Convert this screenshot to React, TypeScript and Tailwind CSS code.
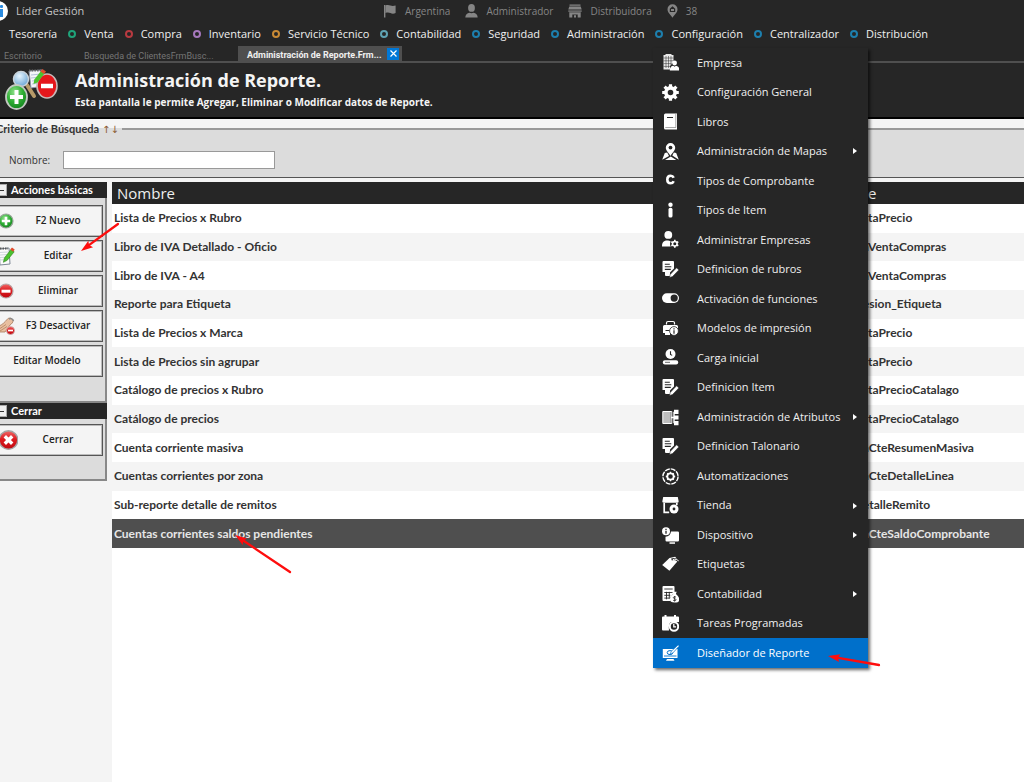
import type { ReactNode } from "react";

const DARK = "#262626";

/* ---------- status bar icons ---------- */

function InfoBadge() {
  return (
    <svg width="8" height="20" viewBox="0 0 8 20" aria-hidden="true">
      <circle cx="-2" cy="10" r="10" fill="#fff" />
      <rect x="0" y="4" width="3" height="3" rx="1" fill="#2a8be0" />
      <rect x="0" y="8" width="3" height="8" fill="#2a8be0" />
    </svg>
  );
}

const statusIcons: Record<string, ReactNode> = {
  flag: (
    <svg width="13" height="14" viewBox="0 0 13 14" fill="currentColor" aria-hidden="true">
      <path d="M0 1h1.400v12.500H0z" />
      <path d="M1.400 1.500c2-.8 3.500-.5 5 .1s3 .7 5.200 0v7.500c-2 .8-3.700.6-5.200 0s-3-.8-5 0z" />
    </svg>
  ),
  user: (
    <svg width="13" height="14" viewBox="0 0 13 14" fill="currentColor" aria-hidden="true">
      <ellipse cx="6.500" cy="3.900" rx="3.400" ry="3.900" />
      <path d="M.3 13.600c0-3 1.800-4.600 4.200-4.900l2 .5 2-.5c2.400.3 4.200 1.900 4.200 4.900z" />
    </svg>
  ),
  store: (
    <svg width="14" height="14" viewBox="0 0 14 14" fill="currentColor" aria-hidden="true">
      <path d="M1.500.5h11v1.300h-11zM1.300 2.600h11.400l1 3H.3z" />
      <path d="M.3 6.200h13.400v1L12.700 8.500H1.300L.3 7.200z" opacity=".7" />
      <path d="M1.300 8.500h11.400v5h-3v-3H4.300v3h-3z" />
      <path d="M6 11.300h2v2.200H6z" />
    </svg>
  ),
  pin: (
    <svg width="11" height="14" viewBox="0 0 11 14" fill="currentColor" aria-hidden="true">
      <path d="M5.500.3a5 5 0 0 1 5 5c0 3.500-3.400 5.600-5 8.400C3.900 10.900.5 8.800.5 5.300a5 5 0 0 1 5-5z" />
      <path d="M5.500 2.300L8.200 4.700v3.300H2.800V4.700z" fill={DARK} />
      <path d="M4 5h3v2H4z" />
    </svg>
  ),
};

const status = [
  { icon: "flag", label: "Argentina" },
  { icon: "user", label: "Administrador" },
  { icon: "store", label: "Distribuidora" },
  { icon: "pin", label: "38" },
];

/* ---------- configuration menu icons (17 x 17 grid) ---------- */

const docPencil = (
  <>
    <path d="M1.500 0h9.500a1 1 0 0 1 1 1v6.500L8 11.500V15H4a1 1 0 0 1-1-1V11H.5V1a1 1 0 0 1 1-1z" />
    <path d="M2.800 3.200h5M2.800 5.800h6.500M2.800 8.400h6" stroke={DARK} strokeWidth="1.100" />
    <path d="M14.600 6.800l2.200 2.200-6.300 6.600-2.900.9.600-3z" stroke={DARK} strokeWidth=".5" />
  </>
);

const menuIcons: Record<string, ReactNode> = {
  building: (
    <>
      <path d="M1.500 1h2V0h6v1h2v7L8 12v3.500H1.500z" opacity=".9" />
      <path d="M1.500 4h10M1.500 6.800h10M1.500 9.600h8M1.500 12.400h7M4 2v12M6.500 2v12M9 2v9" stroke={DARK} strokeWidth=".5" />
      <circle cx="12.600" cy="9" r="2.400" />
      <path d="M7.800 16.500c0-3.200 1.600-4.500 3.500-4.700l1.300 1 1.300-1c1.900.2 3.500 1.500 3.500 4.700z" />
    </>
  ),
  gear: (
    <>
      <circle cx="8.500" cy="8.500" r="4.600" fill="none" stroke="currentColor" strokeWidth="3.600" />
      <path
        d="M8.500.2v3M8.500 13.800v3M.2 8.500h3M13.800 8.500h3M2.600 2.600l2.200 2.200M12.200 12.200l2.200 2.200M14.400 2.600l-2.200 2.200M4.800 12.200l-2.200 2.200"
        stroke="currentColor"
        strokeWidth="3.200"
      />
    </>
  ),
  book: (
    <>
      <path d="M3.500.5H15v16H3.500a1.600 1.600 0 0 1-1.500-1.600V2A1.500 1.500 0 0 1 3.500.5z" />
      <path d="M5 4.500h6" stroke={DARK} strokeWidth="1" />
      <path d="M13.800 1v13.500H3.300" stroke={DARK} strokeWidth=".4" fill="none" />
    </>
  ),
  map: (
    <>
      <path d="M8.500 0a4.700 4.700 0 0 1 4.700 4.700c0 3-3 5-4.700 8.300C6.800 9.700 3.800 7.700 3.800 4.700A4.700 4.700 0 0 1 8.500 0z" />
      <circle cx="8.500" cy="4.600" r="1.900" fill={DARK} />
      <path d="M2.800 10l2.400-.5 1.800 3.500-6.800 3.800zM14.200 10l-2.400-.5-1.500 3 6.500 4.200zM8.800 13.500l5.500 3.400H3z" />
    </>
  ),
  letterC: (
    <path
      d="M11.700 6.200C11 4.600 9.800 4.200 8.700 4.200 6.600 4.200 5.300 5.900 5.300 8s1.300 3.800 3.400 3.800c1.100 0 2.300-.4 3-2"
      transform="translate(0 -.5)"
      fill="none"
      stroke="currentColor"
      strokeWidth="2.600"
    />
  ),
  info: (
    <>
      <circle cx="8.500" cy="2.800" r="2.200" />
      <rect x="6.500" y="5.800" width="4" height="9.800" rx="1.700" />
    </>
  ),
  userGear: (
    <>
      <circle cx="6.300" cy="3.900" r="3.900" />
      <path d="M0 15.500c0-4.500 2.300-5.900 5-5.900 1.500 0 2.800.2 3.700.9-1 1.600-.9 3.400 0 5z" />
      <circle cx="12.800" cy="12.800" r="2.300" fill="none" stroke="currentColor" strokeWidth="1.500" />
      <path
        d="M12.800 8.800v2M12.800 14.800v2M9.300 10.800l1.800 1M14.500 13.800l1.800 1M16.300 10.800l-1.800 1M11.100 13.800l-1.800 1"
        stroke="currentColor"
        strokeWidth="1.600"
      />
    </>
  ),
  docPencil,
  toggle: (
    <>
      <rect x="0" y="3.300" width="17" height="9.600" rx="4.800" />
      <circle cx="12.200" cy="8.100" r="3.600" fill={DARK} />
    </>
  ),
  printer: (
    <>
      <path d="M4.500 4.500V3a1.500 1.500 0 0 1 1.500-1.500h5A1.500 1.500 0 0 1 12.500 3v1.500" fill="none" stroke="currentColor" strokeWidth="1.200" />
      <path d="M2.500 5h12a1.500 1.500 0 0 1 1.500 1.500V12H8v3H3v-2H1V6.500A1.500 1.500 0 0 1 2.500 5z" />
      <path d="M3.500 10.500h4" stroke={DARK} strokeWidth="1" />
      <circle cx="12" cy="11" r="4.400" stroke={DARK} strokeWidth=".8" />
      <path d="M12 8.300v1.200M12 10.300v3.500" stroke={DARK} strokeWidth="1.200" />
    </>
  ),
  clockBase: (
    <>
      <circle cx="8.500" cy="5" r="5" />
      <path d="M8.500 2.200v3.200l1.700 1" stroke={DARK} strokeWidth="1.100" fill="none" />
      <rect x=".8" y="11.200" width="15.400" height="4.200" rx="2" />
      <path d="M3 13.300h5" stroke={DARK} strokeWidth=".7" />
    </>
  ),
  tree: (
    <>
      <path d="M.8 2.500h8v12h-8z" opacity=".7" />
      <path d="M.8 2.500h9v12h-9z" fill="none" stroke="currentColor" strokeWidth="1" />
      <path d="M9 8.500h4M12 2.800v11.500M12 2.800h2M12 14.200h2" stroke="currentColor" strokeWidth="1.400" fill="none" />
      <path d="M12 .8h4.500V5H12zM12 6.400h4.500v4.200H12zM12 12h4.500v4.200H12z" />
    </>
  ),
  automation: (
    <>
      <circle cx="8.500" cy="8.500" r="7.600" fill="none" stroke="currentColor" strokeWidth="1.400" strokeDasharray="5 .97" />
      <circle cx="8.500" cy="8.500" r="3.200" fill="none" stroke="currentColor" strokeWidth="1.800" />
      <path
        d="M8.500 3.800v1.500M8.500 11.700v1.500M3.800 8.500h1.500M11.700 8.500h1.500M5.200 5.200l1 1M10.800 10.800l1 1M11.800 5.200l-1 1M6.200 10.800l-1 1"
        stroke="currentColor"
        strokeWidth="1.300"
      />
    </>
  ),
  shop: (
    <>
      <path d="M1.200 0h14.600l.9 4.500a1.500 1.500 0 0 1-1.500 1.300H1.800A1.500 1.500 0 0 1 .3 4.500z" />
      <path d="M2.200 6v9.300h5M14.800 6v2" stroke="currentColor" strokeWidth="1.700" fill="none" />
      <circle cx="12" cy="12" r="4.500" />
      <circle cx="12" cy="12" r="1.400" fill={DARK} />
    </>
  ),
  device: (
    <>
      <path d="M9 4.500h6.800A1.200 1.200 0 0 1 17 5.700v7.500a1.200 1.200 0 0 1-1.200 1.200H4.700A1.200 1.200 0 0 1 3.500 13.200V9.800C6.500 9.500 8.800 7.500 9 4.500z" />
      <path d="M7.500 15.300h5.500v1.500H7.500z" />
      <circle cx="4" cy="4.200" r="4" />
      <path d="M4 1.700v1.300M4 3.800v3" stroke={DARK} strokeWidth="1.300" />
    </>
  ),
  tag: (
    <>
      <path d="M.2 9L7.500 2 13.200.8l3 3.600-8.800 10.300z" />
      <path d="M9.500 3.500c2-.8 5-.5 7 1.800" fill="none" stroke={DARK} strokeWidth="2" />
      <path d="M10.800 3.600c2-.9 5-.2 6 1.700" fill="none" stroke="currentColor" strokeWidth="1" />
    </>
  ),
  calculator: (
    <>
      <path d="M1.500 0h10a1 1 0 0 1 1 1V6.500L8.500 11v4h-7a1 1 0 0 1-1-1V1a1 1 0 0 1 1-1z" />
      <path d="M2.300 3h8.400M2.300 6.500h8.400M2.300 9.300h6M2.300 12.100h5M4.500 5.800v7.500M7.300 5.800v7" stroke={DARK} strokeWidth=".9" />
      <path d="M10.500 5.800h4.200l-.8 2.200c2 1.500 3.300 3.600 3.300 5.300 0 2.400-1.300 3.300-4.600 3.300S8 15.700 8 13.300c0-1.700 1.300-3.800 3.300-5.300z" />
      <path d="M14 11.200c-.8-.7-2.700-.6-2.700.5s2.700.8 2.700 2-1.900 1.300-2.900.5M12.600 10v5.500" stroke={DARK} strokeWidth=".8" fill="none" />
    </>
  ),
  calendarClock: (
    <>
      <path d="M2.500 0h2v1.500h7.500V0h2v1.500H16a1 1 0 0 1 1 1V7H9c-2 1.500-2.500 4-2 8.500H1a1 1 0 0 1-1-1v-12a1 1 0 0 1 1-1h1.500z" />
      <circle cx="12" cy="11.500" r="4.200" fill={DARK} stroke="currentColor" strokeWidth="2" />
      <path d="M11.800 9v2.800h2.300" stroke="currentColor" strokeWidth="1.300" fill="none" />
    </>
  ),
  designer: (
    <>
      <path d="M.8 4h14.700v9H.8zM5 14h6.500l1 1.800H4z" />
      <path d="M2 11h12.500" stroke="#0070cb" strokeWidth=".9" />
      <ellipse cx="8" cy="7.600" rx="2.800" ry="2" stroke="#0070cb" strokeWidth="1" fill="none" />
      <path d="M16.200-.2l1 1.200-6.200 6.800-3 1.700 1.300-3.200z" stroke="#0070cb" strokeWidth=".7" />
    </>
  ),
};

const menuItems = [
  { icon: "building", label: "Empresa" },
  { icon: "gear", label: "Configuración General" },
  { icon: "book", label: "Libros" },
  { icon: "map", label: "Administración de Mapas", sub: true },
  { icon: "letterC", label: "Tipos de Comprobante" },
  { icon: "info", label: "Tipos de Item" },
  { icon: "userGear", label: "Administrar Empresas" },
  { icon: "docPencil", label: "Definicion de rubros" },
  { icon: "toggle", label: "Activación de funciones" },
  { icon: "printer", label: "Modelos de impresión" },
  { icon: "clockBase", label: "Carga inicial" },
  { icon: "docPencil", label: "Definicion Item" },
  { icon: "tree", label: "Administración de Atributos", sub: true },
  { icon: "docPencil", label: "Definicion Talonario" },
  { icon: "automation", label: "Automatizaciones" },
  { icon: "shop", label: "Tienda", sub: true },
  { icon: "device", label: "Dispositivo", sub: true },
  { icon: "tag", label: "Etiquetas" },
  { icon: "calculator", label: "Contabilidad", sub: true },
  { icon: "calendarClock", label: "Tareas Programadas" },
  { icon: "designer", label: "Diseñador de Reporte", active: true },
];

/* ---------- main navigation ---------- */

const nav = [
  { label: "Tesorería", ring: "" },
  { label: "Venta", ring: "border-[#1fa37a]" },
  { label: "Compra", ring: "border-[#b83a40]" },
  { label: "Inventario", ring: "border-[#a678bd]" },
  { label: "Servicio Técnico", ring: "border-[#c98a35]" },
  { label: "Contabilidad", ring: "border-[#5fa3b3]" },
  { label: "Seguridad", ring: "border-[#1d7fae]" },
  { label: "Administración", ring: "border-[#1d7fae]" },
  { label: "Configuración", ring: "border-[#1d7fae]" },
  { label: "Centralizador", ring: "border-[#1d7fae]" },
  { label: "Distribución", ring: "border-[#1d7fae]" },
];

/* ---------- sidebar icons ---------- */

function Gradients() {
  return (
    <svg width="0" height="0" className="absolute" aria-hidden="true">
      <defs>
        <radialGradient id="green" cx=".4" cy=".3" r=".8">
          <stop offset="0" stopColor="#8fe08a" />
          <stop offset=".5" stopColor="#2fae35" />
          <stop offset="1" stopColor="#0c7a18" />
        </radialGradient>
        <linearGradient id="red" x1="0" y1="0" x2="0" y2="1">
          <stop offset="0" stopColor="#f06a6a" />
          <stop offset=".45" stopColor="#dd1c20" />
          <stop offset="1" stopColor="#c00810" />
        </linearGradient>
        <radialGradient id="lens" cx=".4" cy=".3" r=".8">
          <stop offset="0" stopColor="#e8f6ff" />
          <stop offset="1" stopColor="#5b9cd0" />
        </radialGradient>
      </defs>
    </svg>
  );
}

const actionIcons: Record<string, ReactNode> = {
  add: (
    <>
      <circle cx="6" cy="10" r="7" fill="url(#green)" stroke="#9aa59a" strokeWidth="1.200" />
      <path d="M6 5.800v8.400M1.800 10h8.400" stroke="#fff" strokeWidth="2.600" />
    </>
  ),
  edit: (
    <>
      <path d="M-1 3l10-1 1 16-10 1z" fill="#fbfbfb" stroke="#7c8794" />
      <path d="M0 6.500l8-.5M0 9l8-.5M0 11.500l8-.5M0 14l8-.5" stroke="#c3ccd6" strokeWidth=".8" />
      <path d="M0 2.500h8" stroke="#555" strokeWidth="2" strokeDasharray="1.500 1" />
      <path d="M11 3.500l3.200 2.300-7 8.500-3.800 2 1-4.300z" fill="#4bc22f" stroke="#2a7d1a" strokeWidth=".6" />
      <path d="M12 1.500l2.700 2-1.500 2.300-3-2.300z" fill="#e04a2b" />
    </>
  ),
  remove: (
    <>
      <circle cx="6" cy="10" r="7" fill="url(#red)" stroke="#b8a6a6" strokeWidth="1.200" />
      <path d="M1.500 10.200h9" stroke="#fff" strokeWidth="3" />
    </>
  ),
  disable: (
    <>
      <path d="M-1 10c3-1 6-4 8-6.500s5-1.500 6 1c.5 1.500-1.500 3.500-3 4.500L5 16H-1z" fill="#e8bfa0" stroke="#a77a5c" strokeWidth=".8" />
      <path d="M0 12.500l6-4M0 15l7-4.500" stroke="#b5835f" strokeWidth=".8" />
      <path d="M9 3c2-1 4 0 4.500 2" stroke="#8b8b8b" strokeWidth="1.500" fill="none" />
      <circle cx="10.500" cy="14.500" r="4" fill="url(#red)" stroke="#c9b5b5" strokeWidth=".8" />
      <path d="M8 14.500h5" stroke="#fff" strokeWidth="1.700" />
    </>
  ),
  close: (
    <>
      <circle cx="8.500" cy="10" r="9.300" fill="url(#red)" stroke="#a5a5a5" strokeWidth="1.400" />
      <path d="M4.800 6.300l7.400 7.400M12.200 6.300l-7.400 7.400" stroke="#fff" strokeWidth="3.400" />
    </>
  ),
};

const actions = [
  { icon: "add", label: "F2 Nuevo" },
  { icon: "edit", label: "Editar" },
  { icon: "remove", label: "Eliminar" },
  { icon: "disable", label: "F3 Desactivar" },
  { icon: "", label: "Editar Modelo" },
];

function ActionButton({ icon, label }: { icon: string; label: string }) {
  return (
    <button
      type="button"
      className="flex h-8 w-full items-center border border-l-0 border-[#555] bg-[#f4f4f4] pb-px font-['Open_Sans',sans-serif] text-[10px] font-semibold text-[#222] shadow-[inset_-1px_-1px_0_#bbb,inset_0_1px_0_#bbb]"
    >
      {icon && (
        <svg width="18" height="20" viewBox="0 0 18 20" className="shrink-0" aria-hidden="true">
          {actionIcons[icon]}
        </svg>
      )}
      <span className={icon ? "flex-1 pr-2 pl-1 text-center whitespace-nowrap" : "flex-1 pr-2 text-center whitespace-nowrap"}>{label}</span>
    </button>
  );
}

function PanelHeader({ label }: { label: string }) {
  return (
    <h2 className="-mr-[2px] flex h-4 items-center gap-1 bg-[#262626] font-['Lato',sans-serif] text-[11px] font-bold text-white">
      <span className="flex h-3 w-[7px] items-center border border-l-0 border-[#aaa] bg-[#eee]">
        <span className="h-px w-1 bg-[#333]" />
      </span>
      {label}
    </h2>
  );
}

/* ---------- report table ---------- */

const rows = [
  ["Lista de Precios x Rubro", "staPrecio"],
  ["Libro de IVA Detallado - Oficio", "aVentaCompras"],
  ["Libro de IVA - A4", "aVentaCompras"],
  ["Reporte para Etiqueta", "esion_Etiqueta"],
  ["Lista de Precios x Marca", "staPrecio"],
  ["Lista de Precios sin agrupar", "staPrecio"],
  ["Catálogo de precios x Rubro", "staPrecioCatalago"],
  ["Catálogo de precios", "staPrecioCatalago"],
  ["Cuenta corriente masiva", "aCteResumenMasiva"],
  ["Cuentas corrientes por zona", "aCteDetalleLinea"],
  ["Sub-reporte detalle de remitos", "etalleRemito"],
  ["Cuentas corrientes saldos pendientes", "aCteSaldoComprobante"],
];

function HeaderArt() {
  return (
    <svg width="54" height="44" viewBox="0 0 54 44" aria-hidden="true">
      <path d="M22 17l7 11" stroke="#b79a68" strokeWidth="4" strokeLinecap="round" />
      <circle cx="16" cy="11" r="7.500" fill="url(#lens)" stroke="#c9d3da" strokeWidth="1.500" />
      <path d="M24 3l13-1 2 16-13 2z" fill="#f5f6fa" stroke="#8f98a8" />
      <path d="M26 7l10-1M26 10l10-1M27 13l9-1M27 16l9-1" stroke="#a6b4d6" strokeWidth=".8" />
      <path d="M24 2.500h14" stroke="#666" strokeWidth="2" strokeDasharray="1.500 1.200" />
      <ellipse cx="42" cy="18" rx="10" ry="12" fill="#e5161b" stroke="#c8b8b8" strokeWidth="1.600" />
      <path d="M36 18h12" stroke="#fff" strokeWidth="4.500" />
      <path d="M36 3l3.500 2.500-7 9-4 1.500.8-4.500z" fill="#4bc22f" />
      <path d="M37.500 1l3.500 2.500-2 2.500-3.500-2.500z" fill="#e04a2b" />
      <ellipse cx="11.500" cy="29" rx="10.500" ry="12" fill="url(#green)" stroke="#c2c8c2" strokeWidth="1.800" />
      <path d="M11.500 22v14M5 29h13" stroke="#fff" strokeWidth="4" />
    </svg>
  );
}

function ConfigMenu() {
  return (
    <ul className="absolute top-12 left-[653px] grid h-[620px] w-[215px] auto-rows-fr grid-cols-1 bg-[#262626] shadow-[2px_2px_3px_rgba(0,0,0,0.6)]">
      {menuItems.map((item, i) => (
        <li key={i} className="min-h-0">
          <button
            type="button"
            className={
              item.active
                ? "flex h-full w-full items-center gap-[18px] bg-[#0070cb] pr-[11px] pl-[9px] text-left text-white"
                : "flex h-full w-full items-center gap-[18px] pr-[11px] pl-[9px] text-left text-[#f0f0f0]"
            }
          >
            <svg width="17" height="17" viewBox="0 0 17 17" fill="currentColor" className="shrink-0 text-white" aria-hidden="true">
              {menuIcons[item.icon]}
            </svg>
            <span className="min-w-0 flex-1 whitespace-nowrap">{item.label}</span>
            {item.sub && (
              <svg width="4" height="6" viewBox="0 0 4 6" fill="#fff" className="shrink-0" aria-hidden="true">
                <path d="M0 0l4 3-4 3z" />
              </svg>
            )}
          </button>
        </li>
      ))}
    </ul>
  );
}

function Arrow({ className, width, height, from, to }: { className: string; width: number; height: number; from: [number, number]; to: [number, number] }) {
  const angle = Math.atan2(to[1] - from[1], to[0] - from[0]);
  const deg = (angle * 180) / Math.PI;
  const neck = [to[0] - Math.cos(angle) * 9, to[1] - Math.sin(angle) * 9];
  return (
    <svg className={className} width={width} height={height} viewBox={`0 0 ${width} ${height}`} aria-hidden="true">
      <path d={`M${from[0]} ${from[1]}L${neck[0]} ${neck[1]}`} stroke="#fe0d0d" strokeWidth="2.300" strokeLinecap="round" />
      <path d="M0 0L-12 -4L-10 0L-12 4z" fill="#fe0d0d" transform={`translate(${to[0]} ${to[1]}) rotate(${deg})`} />
    </svg>
  );
}

export default function App() {
  return (
    <div className="relative flex min-h-screen flex-col overflow-hidden bg-[#f4f4f4] font-['Open_Sans',sans-serif] text-[11px] text-[#333]">
      <Gradients />

      <header className="bg-[#262626]">
        <div className="flex h-[22px] items-center text-[10px] text-[#858585]">
          <InfoBadge />
          <span className="w-[376px] pl-2 text-[11px] text-[#c4c4c4]">Líder Gestión</span>
          <div className="flex items-center gap-[15px]">
            {status.map((s) => (
              <span key={s.label} className="flex items-center gap-2">
                {statusIcons[s.icon]}
                {s.label}
              </span>
            ))}
          </div>
        </div>

        <nav className="flex h-6 items-center gap-[11px] pl-[9px] whitespace-nowrap text-[#f0f0f0]">
          {nav.map((n) => (
            <a key={n.label} href="#" className="flex items-center gap-2">
              {n.ring && <span className={`size-2 rounded-full border-2 ${n.ring}`} />}
              {n.label}
            </a>
          ))}
        </nav>

        <div className="flex h-[17px] items-stretch border-b-2 border-[#4f4f4f] font-['Roboto',sans-serif] text-[9px] text-[#757575]">
          <button type="button" className="w-[80px] pt-1 pl-1 text-left">Escritorio</button>
          <button type="button" className="w-[158px] pt-1 pl-1 text-left">Busqueda de ClientesFrmBusc...</button>
          <div className="flex w-[164px] items-center bg-[#4f4f4f] pl-[9px] font-bold text-[#f0f0f0]">
            <button type="button" className="w-[140px] pt-1 text-left whitespace-nowrap">Administración de Reporte.Frm...</button>
            <button type="button" aria-label="Cerrar pestaña" className="flex size-3 items-center justify-center bg-[#0078d7]">
              <svg width="7" height="7" viewBox="0 0 7 7" stroke="#fff" strokeWidth="1.200" aria-hidden="true">
                <path d="M.5.5l6 6M6.500.5l-6 6" />
              </svg>
            </button>
          </div>
        </div>

        <div className="flex h-14 items-center gap-4 border-b-2 border-black pl-[5px] text-[#f4f4f4]">
          <HeaderArt />
          <div className="pb-px">
            <h1 className="text-[18px] leading-6 font-bold">Administración de Reporte.</h1>
            <p className="text-[10px] leading-5 font-bold">Esta pantalla le permite Agregar, Eliminar o Modificar datos de Reporte.</p>
          </div>
        </div>
      </header>

      <fieldset className="border-t-2 border-b border-t-[#999] border-b-[#555] bg-[#dcdcdc]">
        <legend className="flex h-5 items-center gap-[3px] pr-[3px] font-['Lato',sans-serif] text-[11px] font-bold">
          <span className="-ml-1">Criterio de Búsqueda</span>
          <span className="font-['DejaVu_Sans',sans-serif] text-[10px] font-normal text-[#8a5a32]">↑↓</span>
        </legend>
        <div className="flex items-center gap-[13px] pt-3 pb-2 pl-[9px]">
          <label htmlFor="nombre" className="text-[10px]">Nombre:</label>
          <input id="nombre" type="text" className="h-[18px] w-[212px] border border-[#999] bg-white px-1" />
        </div>
      </fieldset>

      <div className="flex flex-1 gap-[5px] pt-1">
        <aside className="w-[107px] shrink-0">
          <section className="border-r-2 border-b-2 border-[#888] bg-[#dcdcdc]">
            <PanelHeader label="Acciones básicas" />
            <div className="flex flex-col gap-[3px] pt-[7px] pr-[2px] pb-6">
              {actions.map((a) => (
                <ActionButton key={a.label} icon={a.icon} label={a.label} />
              ))}
            </div>
          </section>
          <section className="border-r-2 border-b-2 border-[#888] bg-[#dcdcdc]">
            <PanelHeader label="Cerrar" />
            <div className="pt-[5px] pr-[2px] pb-[23px]">
              <ActionButton icon="close" label="Cerrar" />
            </div>
          </section>
        </aside>

        <main className="min-w-0 flex-1 bg-white">
          <table className="h-[366px] w-full table-fixed border-collapse text-left font-['Lato',sans-serif] text-[12px]">
            <thead>
              <tr className="h-[22px] bg-[#262626] font-['Open_Sans',sans-serif] text-[15px] leading-5 text-[#eee]">
                <th className="w-[82%] p-0 pl-[5px] font-normal">Nombre</th>
                <th className="p-0 pl-[2px] font-normal">re</th>
              </tr>
            </thead>
            <tbody>
              {rows.map(([name, report], i) => (
                <tr
                  key={i}
                  className={
                    i === rows.length - 1
                      ? "bg-[#4f4f4f] font-bold text-[#e6e6e6]"
                      : i % 2
                        ? "bg-[#f4f4f4] font-bold"
                        : "bg-white font-bold"
                  }
                >
                  <td className="p-0 pl-[2px]">{name}</td>
                  <td className="p-0 pl-[3px]">{report}</td>
                </tr>
              ))}
            </tbody>
          </table>
        </main>
      </div>

      <ConfigMenu />
      <Arrow className="absolute top-[220px] left-[78px]" width={44} height={34} from={[40, 4]} to={[3, 31]} />
      <Arrow className="absolute top-[532px] left-[232px]" width={60} height={44} from={[58, 40]} to={[3, 3]} />
      <Arrow className="absolute top-[650px] left-[826px]" width={56} height={20} from={[53, 15]} to={[2, 6]} />
    </div>
  );
}
